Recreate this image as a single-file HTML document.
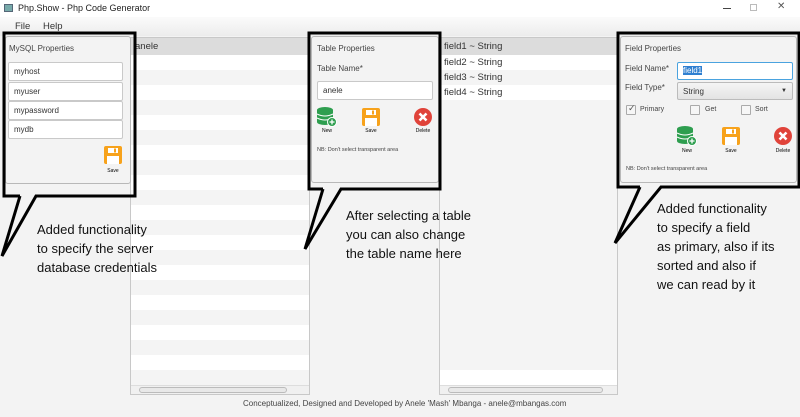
<!DOCTYPE html>
<html><head><meta charset="utf-8"><style>
*{margin:0;padding:0;box-sizing:border-box}
body{width:800px;height:417px;overflow:hidden;background:#f3f3f3;font-family:"Liberation Sans",sans-serif;position:relative;font-size:8px;color:#333}
.abs{position:absolute}
.title{left:0;top:0;width:800px;height:17px;background:#fff;font-size:9px;color:#222}
.menu{left:0;top:17px;width:800px;height:19px;background:linear-gradient(#fbfbfb,#ececec);font-size:9.5px;color:#333}
.list{background:#fff;border:1px solid #c8c8c8}
.row{height:15px;font-size:9.5px;padding-left:2px;line-height:15px;color:#333}
.row:nth-child(even){background:#f4f4f4}
.panel{background:#f3f3f3;border:1px solid #b8b8b8;border-radius:3px}
.inp{position:absolute;background:#fff;border:1px solid #c9c9c9;border-radius:2px;font-size:8px;padding-left:5px;color:#333}
.lbl{position:absolute;font-size:8px;color:#444}
.cap{position:absolute;font-size:5px;color:#333;text-align:center;width:20px}
.note{position:absolute;font-family:"Liberation Sans",sans-serif;font-size:13px;line-height:19px;color:#111}
.cb{position:absolute;width:10px;height:10px;border:1px solid #aaa;background:#f6f6f6;border-radius:1px}
</style></head><body>
<div class="abs title"><span style="position:absolute;left:4px;top:4px;width:9px;height:8px;background:#7aa;border:1px solid #567"></span><span style="position:absolute;left:18px;top:3px">Php.Show - Php Code Generator</span>
<span style="position:absolute;left:723px;top:8px;width:8px;height:1px;background:#444"></span>
<span style="position:absolute;left:750px;top:4px;width:7px;height:7px;border:1px solid #bbb"></span>
<span style="position:absolute;left:777px;top:1px;font-size:10px;color:#555">✕</span></div>
<div class="abs menu"><span style="position:absolute;left:15px;top:4px">File</span><span style="position:absolute;left:43px;top:4px">Help</span></div>

<div class="abs list" style="left:130px;top:37px;width:180px;height:358px">
<div style="background:#dcdcdc;height:17px;font-size:9.5px;line-height:17px;padding-left:4px">anele</div>
<div><div class="row"></div><div class="row"></div><div class="row"></div><div class="row"></div><div class="row"></div><div class="row"></div><div class="row"></div><div class="row"></div><div class="row"></div><div class="row"></div><div class="row"></div><div class="row"></div><div class="row"></div><div class="row"></div><div class="row"></div><div class="row"></div><div class="row"></div><div class="row"></div><div class="row"></div><div class="row"></div><div class="row"></div><div class="row"></div></div>
<div style="position:absolute;left:0;bottom:0;width:100%;height:9px;background:#f0f0f0;border-top:1px solid #ddd"><div style="position:absolute;left:8px;top:1px;width:148px;height:6px;border:1px solid #bbb;border-radius:3px;background:#e8e8e8"></div></div>
</div>
<div class="abs list" style="left:439px;top:37px;width:179px;height:358px">
<div style="background:#dcdcdc;height:17px;font-size:9.5px;line-height:17px;padding-left:4px">field1 ~ String</div>
<div><div class="row" style="background:#fff;padding-left:4px">field2 ~ String</div><div class="row" style="background:#f4f4f4;padding-left:4px">field3 ~ String</div><div class="row" style="background:#fff;padding-left:4px">field4 ~ String</div><div class="row"></div><div class="row" style="background:#f4f4f4"></div><div class="row"></div><div class="row" style="background:#f4f4f4"></div><div class="row"></div><div class="row" style="background:#f4f4f4"></div><div class="row"></div><div class="row" style="background:#f4f4f4"></div><div class="row"></div><div class="row" style="background:#f4f4f4"></div><div class="row"></div><div class="row" style="background:#f4f4f4"></div><div class="row"></div><div class="row" style="background:#f4f4f4"></div><div class="row"></div><div class="row" style="background:#f4f4f4"></div><div class="row"></div><div class="row" style="background:#f4f4f4"></div></div>
<div style="position:absolute;left:0;bottom:0;width:100%;height:9px;background:#f0f0f0;border-top:1px solid #ddd"><div style="position:absolute;left:8px;top:1px;width:155px;height:6px;border:1px solid #bbb;border-radius:3px;background:#e8e8e8"></div></div>
</div>

<!-- Left panel -->
<div class="abs panel" style="left:5px;top:36px;width:126px;height:148px"></div>
<div class="lbl" style="left:9px;top:44px">MySQL Properties</div>
<div class="inp" style="left:8px;top:62px;width:115px;height:19px;line-height:18px">myhost</div>
<div class="inp" style="left:8px;top:82px;width:115px;height:19px;line-height:18px">myuser</div>
<div class="inp" style="left:8px;top:101px;width:115px;height:19px;line-height:18px">mypassword</div>
<div class="inp" style="left:8px;top:120px;width:115px;height:19px;line-height:18px">mydb</div>

<!-- Middle panel -->
<div class="abs panel" style="left:311px;top:36px;width:128px;height:147px"></div>
<div class="lbl" style="left:317px;top:44px">Table Properties</div>
<div class="lbl" style="left:317px;top:64px">Table Name*</div>
<div class="inp" style="left:317px;top:81px;width:116px;height:19px;line-height:18px">anele</div>
<div class="lbl" style="left:317px;top:147px;font-size:5.5px">NB: Don't select transparent area</div>

<!-- Right panel -->
<div class="abs panel" style="left:620px;top:36px;width:177px;height:147px"></div>
<div class="lbl" style="left:625px;top:44px">Field Properties</div>
<div class="lbl" style="left:625px;top:64px">Field Name*</div>
<div class="lbl" style="left:625px;top:83px">Field Type*</div>
<div class="inp" style="left:677px;top:62px;width:116px;height:18px;border-color:#4aa3df;line-height:16px"><span style="background:#2f7fd0;color:#fff">field1</span></div>
<div class="inp" style="left:677px;top:82px;width:116px;height:18px;line-height:17px;background:linear-gradient(#f5f5f5,#e3e3e3);border-color:#bbb">String<span style="position:absolute;right:5px;top:0;font-size:6px">▼</span></div>
<div class="cb" style="left:626px;top:105px"><span style="position:absolute;left:1px;top:-3px;font-size:9px;color:#555">✓</span></div>
<div class="lbl" style="left:640px;top:106px;font-size:7px">Primary</div>
<div class="cb" style="left:690px;top:105px"></div><div class="lbl" style="left:705px;top:106px;font-size:7px">Get</div>
<div class="cb" style="left:741px;top:105px"></div><div class="lbl" style="left:755px;top:106px;font-size:7px">Sort</div>
<div class="lbl" style="left:626px;top:166px;font-size:5.5px">NB: Don't select transparent area</div>

<svg class="abs" style="left:0;top:0" width="800" height="417">
<defs>
<g id="save"><rect x="0" y="0" width="18" height="18" rx="2" fill="#f7a21b"/><rect x="4" y="2" width="10" height="5" fill="#fff"/><rect x="10" y="2.5" width="2" height="4" fill="#f7a21b"/><rect x="3" y="10" width="12" height="8" fill="#fff"/></g>
<g id="db"><ellipse cx="8" cy="3" rx="8" ry="3" fill="#2e9e4f"/><rect x="0" y="3" width="16" height="12" fill="#2e9e4f"/><ellipse cx="8" cy="15" rx="8" ry="3" fill="#2e9e4f"/><path d="M0 7q8 4 16 0M0 11q8 4 16 0" stroke="#fff" stroke-width="1" fill="none"/><circle cx="15" cy="15" r="4.5" fill="#2e9e4f" stroke="#fff"/><path d="M12.5 15h5M15 12.5v5" stroke="#fff" stroke-width="1.3"/></g>
<g id="del"><circle cx="9" cy="9" r="9" fill="#e0433a"/><path d="M5.5 5.5l7 7M12.5 5.5l-7 7" stroke="#fff" stroke-width="2.6"/></g>
</defs>
<use href="#save" x="104" y="146"/><text x="113" y="172" font-size="5" text-anchor="middle" font-family="Liberation Sans">Save</text>
<use href="#db" x="317" y="107"/><text x="327" y="132" font-size="5" text-anchor="middle" font-family="Liberation Sans">New</text>
<use href="#save" x="362" y="108"/><text x="371" y="132" font-size="5" text-anchor="middle" font-family="Liberation Sans">Save</text>
<use href="#del" x="414" y="108"/><text x="423" y="132" font-size="5" text-anchor="middle" font-family="Liberation Sans">Delete</text>
<use href="#db" x="677" y="126"/><text x="687" y="152" font-size="5" text-anchor="middle" font-family="Liberation Sans">New</text>
<use href="#save" x="722" y="127"/><text x="731" y="152" font-size="5" text-anchor="middle" font-family="Liberation Sans">Save</text>
<use href="#del" x="774" y="127"/><text x="783" y="152" font-size="5" text-anchor="middle" font-family="Liberation Sans">Delete</text>
<g fill="none" stroke="#000" stroke-width="3" stroke-linejoin="miter">
<path d="M20 196H4V33H135V196H36L2 256L20 196"/>
<path d="M323 189H309V33H440V189H341L305 249L323 189"/>
<path d="M640 187H618V33H799V187H661L615 243L640 187"/>
</g>
</svg>

<div class="note" style="left:37px;top:220px">Added functionality<br>to specify the server<br>database credentials</div>
<div class="note" style="left:346px;top:206px">After selecting a table<br>you can also change<br>the table name here</div>
<div class="note" style="left:657px;top:199px">Added functionality<br>to specify a field<br>as primary, also if its<br>sorted and also if<br>we can read by it</div>
<div class="abs" style="left:243px;top:399px;font-size:8px;color:#444">Conceptualized, Designed and Developed by Anele 'Mash' Mbanga - anele@mbangas.com</div>
</body></html>
